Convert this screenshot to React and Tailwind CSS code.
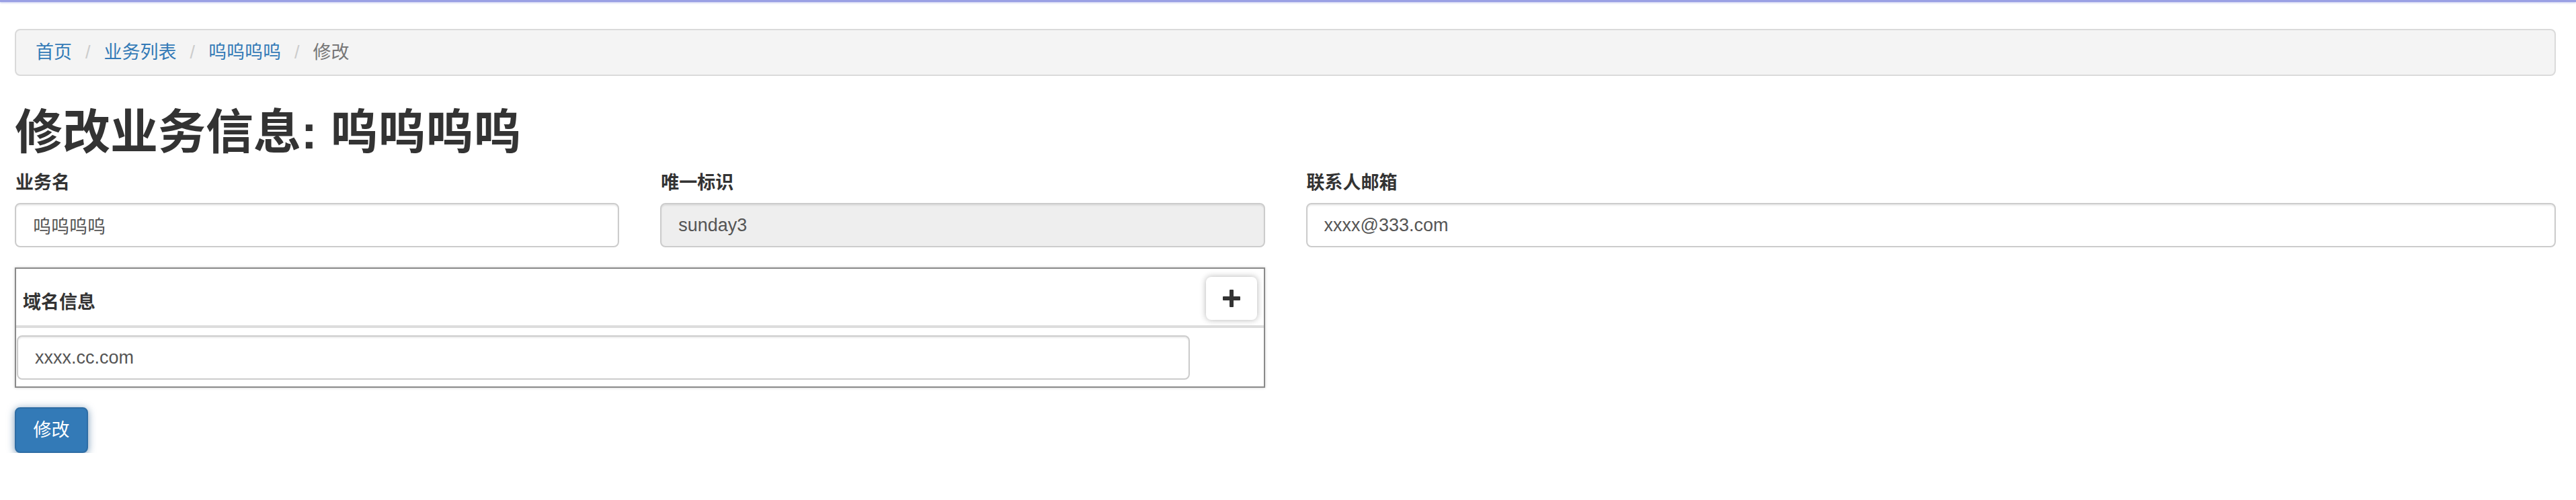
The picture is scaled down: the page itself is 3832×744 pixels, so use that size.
import React from 'react'

const font = "font-['Liberation_Sans','Noto_Sans_CJK_SC',sans-serif]"

const crumbs = [
  { label: '首页', link: true },
  { label: '业务列表', link: true },
  { label: '呜呜呜呜', link: true },
  { label: '修改', link: false }
]

const Field = ({ label, value, disabled }) => (
  <div className="flex flex-col">
    <label className="h-[39px] leading-[39px] text-[27px] font-bold text-[#333] pl-px">{label}</label>
    <input
      readOnly
      value={value}
      disabled={disabled}
      className={`mt-[10px] h-[66px] w-full rounded-[8px] border-2 border-[#ccc] pl-[25px] text-[27px] text-[#555] shadow-[inset_0_2px_2px_rgba(0,0,0,0.075)] outline-none ${font} ${disabled ? 'bg-[#eee]' : 'bg-white'}`}
    />
  </div>
)

const App = () => {
  return (
    <div className={`bg-white ${font}`}>
      {/* top bar */}
      <div className="h-[3px] bg-[#9aa0e4] shadow-[0_1px_3px_rgba(120,130,220,0.5)]"></div>

      <div className="pl-[22px] pr-[30px]">
        {/* Breadcrumb */}
        <nav className="mt-[40px] flex h-[70px] items-center rounded-[8px] border-2 border-[#dadada] bg-[#f4f4f4] pl-[29px] text-[27px]">
          {crumbs.map((c, i) => (
            <React.Fragment key={c.label}>
              {i > 0 && <span className="mx-[20px] text-[#ccc]">/</span>}
              <span className={c.link ? 'text-[#337ab7]' : 'text-[#777]'}>{c.label}</span>
            </React.Fragment>
          ))}
        </nav>

        <h1 className="mt-[45px] h-[77px] text-[71px] font-bold leading-[77px] text-[#333]">修改业务信息: 呜呜呜呜</h1>

        {/* Form */}
        <form className="mt-[18px] grid grid-cols-4 gap-x-[61px] gap-y-[30px]">
          <Field label="业务名" value="呜呜呜呜" />
          <Field label="唯一标识" value="sunday3" disabled />
          <div className="col-span-2">
            <Field label="联系人邮箱" value="xxxx@333.com" />
          </div>

          {/* Domain table */}
          <div className="col-span-2 border-2 border-[#8a8a8a] shadow-[0_0_4px_rgba(0,0,0,0.2)]">
            <div className="grid h-[88px] grid-cols-[1fr_110px] border-b-4 border-[#ddd]">
              <div className="flex items-end pb-[14px] pl-[10px]">
                <span className="text-[27px] font-bold leading-[39px] text-[#333]">域名信息</span>
              </div>
              <div className="flex items-start pl-[24px] pt-[12px]">
                <button
                  type="button"
                  className="flex h-[64px] w-[76px] items-center justify-center rounded-[8px] bg-white shadow-[0_0_10px_rgba(0,0,0,0.3)]"
                >
                  <svg width="26" height="26" viewBox="0 0 26 26">
                    <rect x="10" y="0" width="6" height="26" rx="1" fill="#333" />
                    <rect x="0" y="10" width="26" height="6" rx="1" fill="#333" />
                  </svg>
                </button>
              </div>
            </div>
            <div className="grid grid-cols-[1fr_110px] pb-[10px] pt-[11px]">
              <div className="pl-px">
                <input
                  readOnly
                  value="xxxx.cc.com"
                  className={`h-[66px] w-full rounded-[8px] border-2 border-[#ccc] bg-white pl-[25px] text-[27px] text-[#555] shadow-[inset_0_2px_2px_rgba(0,0,0,0.075)] outline-none ${font}`}
                />
              </div>
              <div></div>
            </div>
          </div>
        </form>

        <button
          type="button"
          className="mt-[29px] flex h-[68px] w-[109px] items-center justify-center rounded-[8px] border-2 border-[#2e6da4] bg-[#337ab7] text-[27px] text-white shadow-[0_2px_12px_rgba(40,90,140,0.65)]"
        >
          修改
        </button>
      </div>
    </div>
  )
}

export default App
